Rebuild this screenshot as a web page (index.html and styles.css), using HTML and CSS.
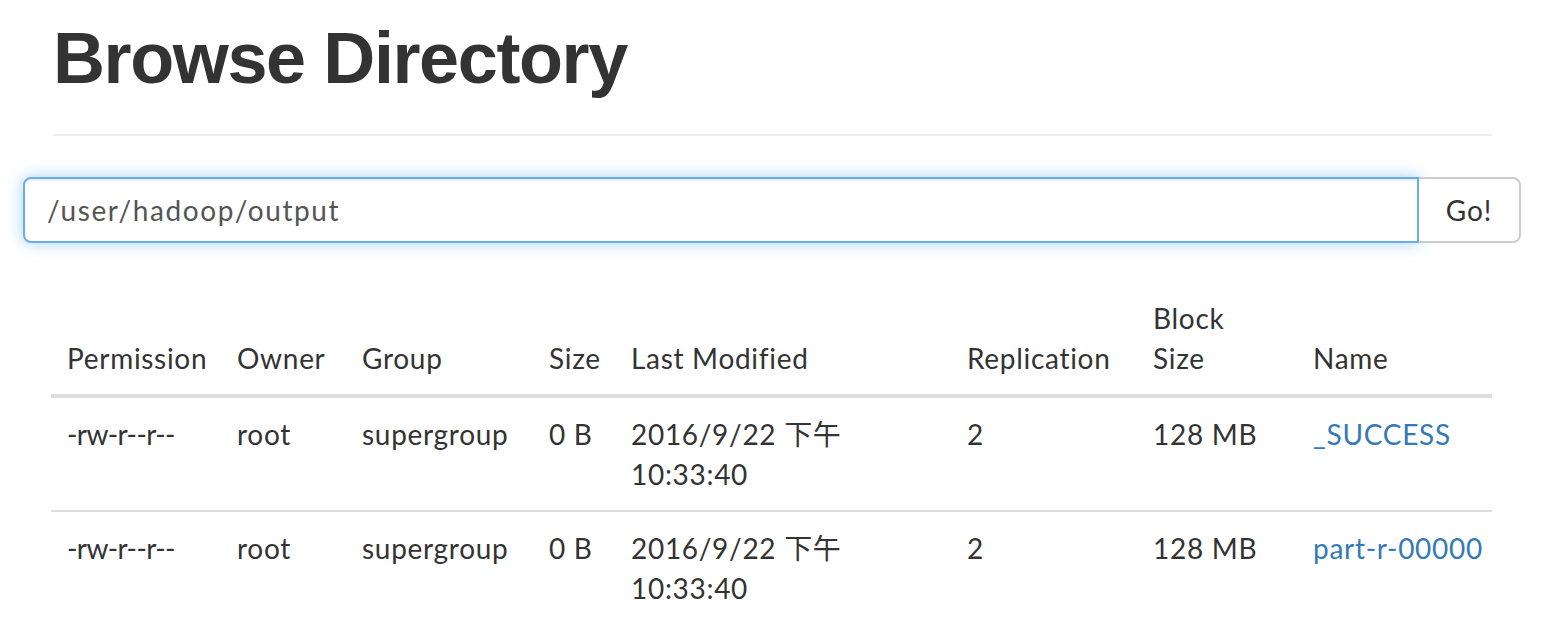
FILE: index.html
```html
<!DOCTYPE html>
<html>
<head>
<meta charset="utf-8">
<link rel="stylesheet" href="styles.css">
</head>
<body>
<div class="page">
  <div class="page-header">
    <h1>Browse Directory</h1>
  </div>
  <form class="input-group">
    <input class="form-control" type="text" value="/user/hadoop/output">
    <button class="btn" type="button">Go!</button>
  </form>
  <table class="table">
    <colgroup>
      <col class="c1"><col class="c2"><col class="c3"><col class="c4">
      <col class="c5"><col class="c6"><col class="c7"><col class="c8">
    </colgroup>
    <thead>
      <tr>
        <th>Permission</th>
        <th>Owner</th>
        <th>Group</th>
        <th>Size</th>
        <th>Last Modified</th>
        <th>Replication</th>
        <th>Block<br>Size</th>
        <th>Name</th>
      </tr>
    </thead>
    <tbody>
      <tr>
        <td class="perm">-rw-r--r--</td>
        <td>root</td>
        <td>supergroup</td>
        <td>0 B</td>
        <td>2016/9/22 下午<br>10:33:40</td>
        <td>2</td>
        <td>128 MB</td>
        <td><a href="#">_SUCCESS</a></td>
      </tr>
      <tr>
        <td class="perm">-rw-r--r--</td>
        <td>root</td>
        <td>supergroup</td>
        <td>0 B</td>
        <td>2016/9/22 下午<br>10:33:40</td>
        <td>2</td>
        <td>128 MB</td>
        <td><a href="#">part-r-00000</a></td>
      </tr>
    </tbody>
  </table>
</div>
</body>
</html>
```

FILE: styles.css
```css
html, body {
  margin: 0;
  padding: 0;
  background: #fff;
}

body {
  font-family: "Lato", "Noto Sans CJK SC", sans-serif;
  font-size: 28px;
  line-height: 40px;
  letter-spacing: 0.7px;
  color: #333;
}

.page {
  padding: 0;
}

.page-header {
  margin: 0 74px 0 53px;
  padding-top: 19px;
  padding-bottom: 36px;
  border-bottom: 2px solid #eee;
}

.page-header h1 {
  margin: 0;
  font-family: "Liberation Sans", Arial, sans-serif;
  font-weight: bold;
  font-size: 72px;
  line-height: 79px;
  letter-spacing: -1.4px;
  color: #333;
}

.input-group {
  display: flex;
  margin: 41px 45px 0 23px;
  height: 66px;
}

.form-control {
  flex: 1;
  box-sizing: border-box;
  height: 66px;
  margin: 0;
  padding: 0 22px;
  font-family: "Lato", "Noto Sans CJK SC", sans-serif;
  font-size: 28px;
  letter-spacing: 1.6px;
  color: #555;
  background: #fff;
  border: 2px solid #66afe9;
  border-radius: 8px 0 0 8px;
  outline: none;
  box-shadow: inset 0 2px 2px rgba(0,0,0,.075), 0 0 16px rgba(102,175,233,.6);
}

.btn {
  box-sizing: border-box;
  width: 102px;
  height: 66px;
  margin: 0;
  padding: 0;
  font-family: "Lato", "Noto Sans CJK SC", sans-serif;
  font-size: 28px;
  letter-spacing: 1px;
  color: #333;
  background: #fff;
  border: 2px solid #ccc;
  border-left: 0;
  border-radius: 0 8px 8px 0;
}

.table {
  margin: 39px 0 0 51px;
  width: 1441px;
  border-collapse: collapse;
  border-spacing: 0;
  table-layout: fixed;
}

.c1 { width: 170px; }
.c2 { width: 125px; }
.c3 { width: 187px; }
.c4 { width: 82px; }
.c5 { width: 336px; }
.c6 { width: 186px; }
.c7 { width: 160px; }
.c8 { width: 195px; }

.table th,
.table td {
  padding: 16px;
  text-align: left;
  vertical-align: top;
  line-height: 40px;
  white-space: nowrap;
}

.table th {
  font-weight: normal;
  vertical-align: bottom;
  border-bottom: 4px solid #ddd;
}

.table .perm {
  letter-spacing: -0.6px;
}

.table tbody tr + tr td {
  border-top: 2px solid #ddd;
}

.table a {
  color: #337ab7;
  text-decoration: none;
}
```
